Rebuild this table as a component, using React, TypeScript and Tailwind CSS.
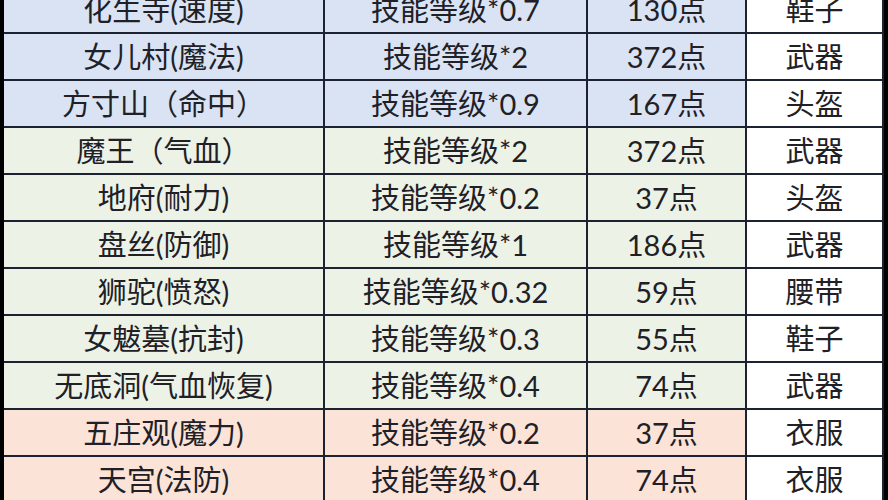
const rows: [string, string, string, string, string][] = [
  ["化生寺(速度)", "技能等级*0.7", "130点", "鞋子", "blue"],
  ["女儿村(魔法)", "技能等级*2", "372点", "武器", "blue"],
  ["方寸山（命中）", "技能等级*0.9", "167点", "头盔", "blue"],
  ["魔王（气血）", "技能等级*2", "372点", "武器", "green"],
  ["地府(耐力)", "技能等级*0.2", "37点", "头盔", "green"],
  ["盘丝(防御)", "技能等级*1", "186点", "武器", "green"],
  ["狮驼(愤怒)", "技能等级*0.32", "59点", "腰带", "green"],
  ["女魃墓(抗封)", "技能等级*0.3", "55点", "鞋子", "green"],
  ["无底洞(气血恢复)", "技能等级*0.4", "74点", "武器", "green"],
  ["五庄观(魔力)", "技能等级*0.2", "37点", "衣服", "pink"],
  ["天宫(法防)", "技能等级*0.4", "74点", "衣服", "pink"],
];

const bg: Record<string, string> = {
  blue: "bg-[#d9e3f4]",
  green: "bg-[#edf2e6]",
  pink: "bg-[#fbe3d8]",
};

export default function App() {
  return (
    <div className="w-[888px] h-[500px] overflow-hidden bg-black pl-[4px] pr-[5px]">
      <table
        className="-mt-[15px] w-[879px] border-collapse table-fixed text-[29px] text-[#202026]"
        style={{ fontFamily: 'Lato, "Noto Sans CJK SC", sans-serif' }}
      >
        <colgroup>
          <col className="w-[320px]" />
          <col className="w-[263px]" />
          <col className="w-[159px]" />
          <col className="w-[137px]" />
        </colgroup>
        <tbody>
          {rows.map(([name, formula, pts, slot, tone], i) => (
            <tr key={i} className="h-[47px]">
              <td className={`${bg[tone]} border-2 border-l-0 border-[#1d2230] text-center leading-none whitespace-nowrap`}>{name}</td>
              <td className={`${bg[tone]} border-2 border-[#1d2230] text-center leading-none whitespace-nowrap`}>{formula}</td>
              <td className={`${bg[tone]} border-2 border-[#1d2230] text-center leading-none whitespace-nowrap`}>{pts}</td>
              <td className="bg-white border-2 border-[#1d2230] text-center leading-none whitespace-nowrap">{slot}</td>
            </tr>
          ))}
        </tbody>
      </table>
    </div>
  );
}
